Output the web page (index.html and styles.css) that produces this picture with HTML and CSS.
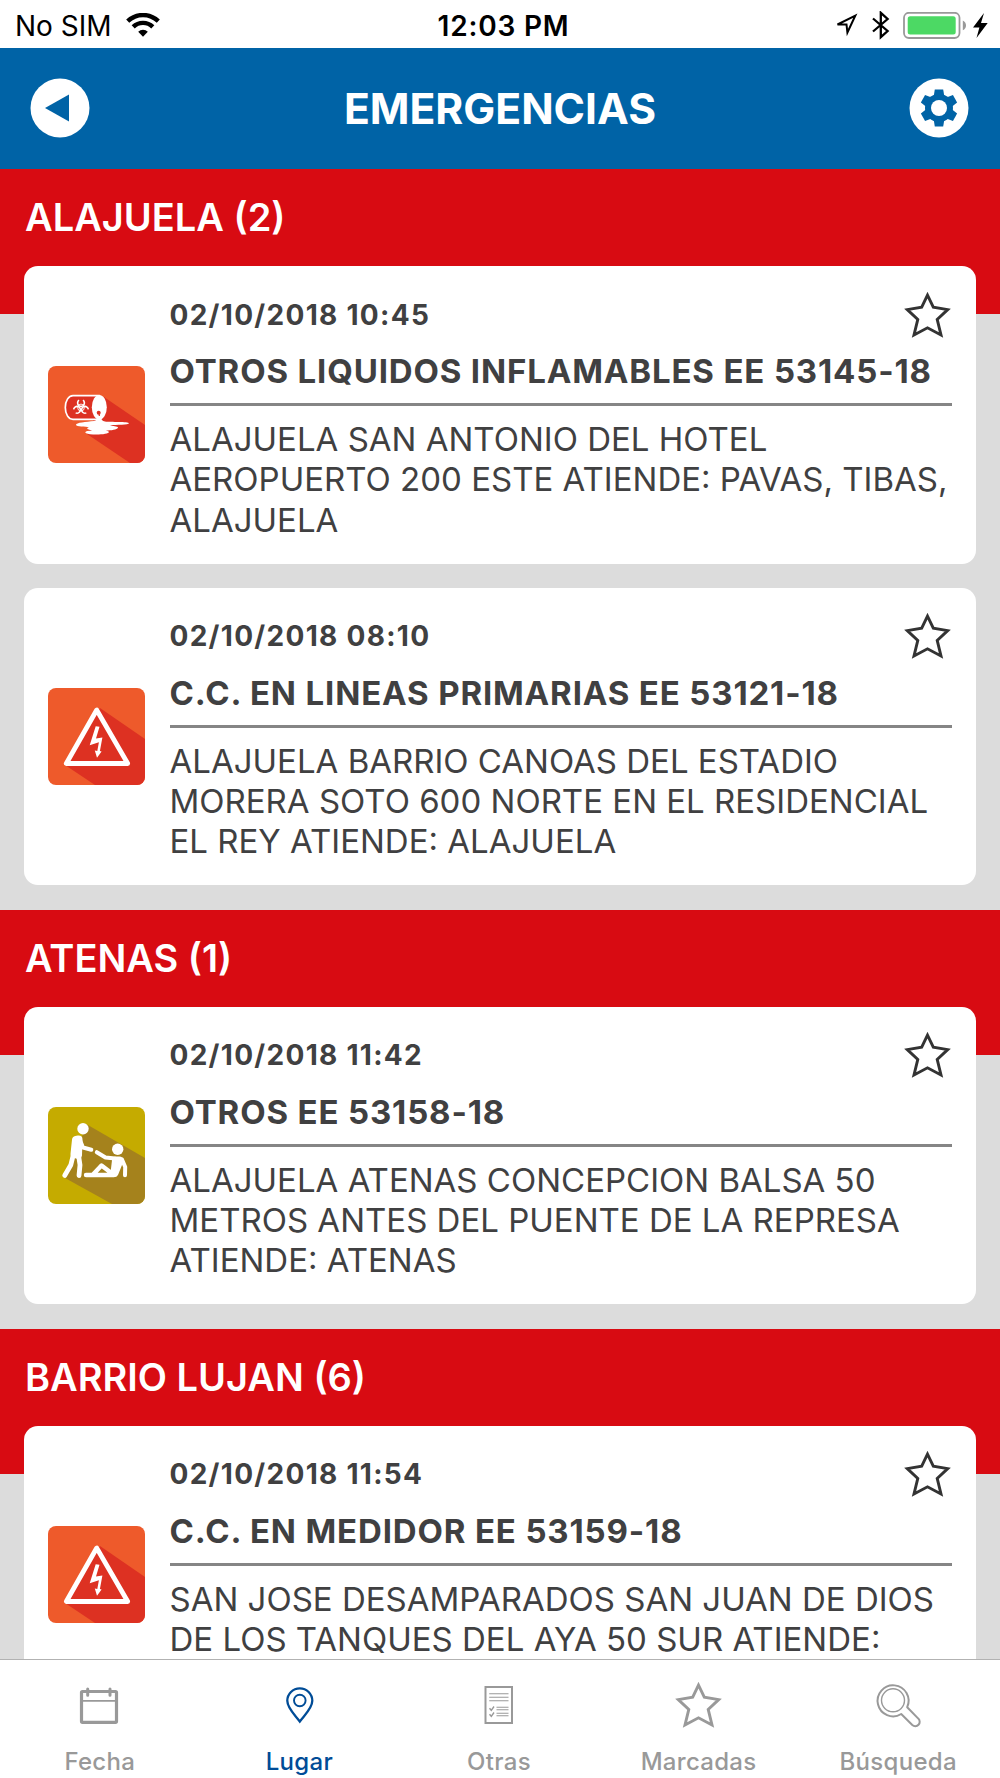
FILE: index.html
```html
<!DOCTYPE html>
<html lang="es">
<head>
    <meta charset="UTF-8">
    <meta name="viewport" content="width=device-width, initial-scale=1.0">
    <title>Emergencias</title>
    <link rel="stylesheet" href="styles.css">
</head>
<body>
    <!-- Shared icons -->
    <svg class="sprite" width="0" height="0">
        <symbol id="star" viewBox="0 0 48 48">
            <path d="M23.5 4.2L29.3 16.2L43.7 18.6L33.2 28.4L37 44L23.5 36.8L10 44L13.8 28.4L3.3 18.6L17.7 16.2Z" fill="none" stroke="currentColor" stroke-width="2.9" stroke-miterlimit="10"/>
        </symbol>
        <symbol id="electric" viewBox="0 0 97 97">
            <rect width="97" height="97" rx="8" fill="#ee5a2b"/>
            <path d="M52 20L97 51V89A8 8 0 0 1 89 97H47L17 77Z" fill="#dd3122"/>
            <path d="M48.7 22L18.3 75.5H79.7Z" fill="#dd3122" stroke="#fff" stroke-width="4.8" stroke-linejoin="round"/>
            <path d="M47.7 38.3L51.5 38.7L48 50.6L54.4 49.4L51.9 63L53.6 63.4L49 69.7L46.8 62.6L49.3 63L50.9 54.3L41.7 57.3Z" fill="#fff"/>
        </symbol>
    </svg>

    <div class="app">
        <!-- Status bar -->
        <div class="status-bar">
            <div class="status-left">
                <span>No SIM</span>
                <svg width="34" height="25" viewBox="0 0 34 25" fill="none" stroke="#000" stroke-width="4.4">
                    <path d="M1.7 8.2A22 22 0 0 1 32.3 8.2"/>
                    <path d="M7.2 13.9A14 14 0 0 1 26.8 13.9"/>
                    <path d="M12.2 18.7A6.8 6.8 0 0 1 21.8 18.7L17 23.8Z" fill="#000" stroke="none"/>
                </svg>
            </div>
            <div class="status-time">12:03 PM</div>
            <div class="status-right">
                <svg width="24" height="26" viewBox="0 0 24 26">
                    <path d="M2.5 11.5L20.3 2.6L12.4 19.5L11.5 11.5Z" fill="none" stroke="#000" stroke-width="2"/>
                </svg>
                <svg class="bluetooth" width="18" height="30" viewBox="0 0 18 30">
                    <path d="M1 7.5L15.6 20L8.8 26.2V1.8L15.6 8L1 20.5" fill="none" stroke="#000" stroke-width="2.3"/>
                </svg>
                <svg class="battery" width="64" height="28" viewBox="0 0 64 28">
                    <rect x="1" y=".8" width="55.5" height="25.2" rx="5" fill="none" stroke="#999" stroke-width="1.8"/>
                    <rect x="4.7" y="4.2" width="48" height="18.3" rx="2.5" fill="#4cd964"/>
                    <path d="M59.8 8.5Q63 10.2 63 13.4T59.8 18.3Z" fill="#999"/>
                </svg>
                <svg width="15" height="26" viewBox="0 0 15 26">
                    <path d="M11 0L0 14.5H6.4L3.5 25L14.7 10H8Z"/>
                </svg>
            </div>
        </div>

        <!-- Header -->
        <div class="header">
            <svg class="round-btn" viewBox="0 0 60 60">
                <circle cx="30" cy="30" r="29.5" fill="#fff"/>
                <path d="M15 30L39 16.4V43.6Z" fill="#0063a6"/>
            </svg>
            <h1>EMERGENCIAS</h1>
            <svg class="round-btn" viewBox="-30 -30 60 60">
                <circle r="29.5" fill="#fff"/>
                <g fill="#0063a6">
                    <circle r="14"/>
                    <path id="tooth" d="M-4.2 -18.5H4.2L5.4 -11H-5.4Z"/>
                    <use href="#tooth" transform="rotate(60)"/>
                    <use href="#tooth" transform="rotate(120)"/>
                    <use href="#tooth" transform="rotate(180)"/>
                    <use href="#tooth" transform="rotate(240)"/>
                    <use href="#tooth" transform="rotate(300)"/>
                </g>
                <circle r="8" fill="#fff"/>
            </svg>
        </div>

        <!-- Emergency list -->
        <div class="list">
            <div class="section">
                <h2>ALAJUELA (2)</h2>
                <div class="card">
                    <svg class="card-icon" viewBox="0 0 97 97">
                        <rect width="97" height="97" rx="8" fill="#ee5a2b"/>
                        <path d="M56 31L97 59V89A8 8 0 0 1 89 97H82L39 68Z" fill="#dd3122"/>
                        <path d="M51 29.7H25C20.5 29.7 17.3 35 17.3 41.5S20.5 53.3 25 53.3H51Z" fill="#dd3122" stroke="#fff" stroke-width="1.7"/>
                        <ellipse cx="51.3" cy="41.3" rx="7.5" ry="12.3" fill="#fff"/>
                        <!-- biohazard sign -->
                        <g fill="none" stroke="#fff" stroke-width="1.6">
                            <circle cx="33" cy="41.5" r="3.4" stroke-width=".9"/>
                            <path id="claw" d="M31 34.2A3.4 3.4 0 1 0 35 34.2"/>
                            <use href="#claw" transform="rotate(120 33 41.5)"/>
                            <use href="#claw" transform="rotate(240 33 41.5)"/>
                        </g>
                        <circle cx="50.7" cy="46.8" r="2" fill="#dd3122"/>
                        <path d="M51.3 46V54" stroke="#dd3122" stroke-width="1.2"/>
                        <path d="M49.3 50Q49.5 54.5 46 55C38 56 28 56.5 28 58.8C28 61 38 60.5 41 61.3C36 63 43 64 44 64.5C36 64.7 35 67.5 42 68.2C50 69.2 61 68 61 66C61 65 58 64.7 58 64.4C65 64.7 70 63 70 61.5C70 60.3 64 60 62 59.3C68 58.8 81 59 81 57.3C81 55.3 62 56.3 57 55.5Q53 55 52.8 50Z" fill="#fff"/>
                    </svg>
                    <div class="card-body">
                        <div class="card-top">
                            <span class="date">02/10/2018 10:45</span>
                            <svg class="star"><use href="#star"/></svg>
                        </div>
                        <h3>OTROS LIQUIDOS INFLAMABLES EE 53145-18</h3>
                        <p>ALAJUELA SAN ANTONIO DEL HOTEL<br>AEROPUERTO 200 ESTE ATIENDE: PAVAS, TIBAS,<br>ALAJUELA</p>
                    </div>
                </div>
                <div class="card">
                    <svg class="card-icon"><use href="#electric"/></svg>
                    <div class="card-body">
                        <div class="card-top">
                            <span class="date">02/10/2018 08:10</span>
                            <svg class="star"><use href="#star"/></svg>
                        </div>
                        <h3>C.C. EN LINEAS PRIMARIAS EE 53121-18</h3>
                        <p>ALAJUELA BARRIO CANOAS DEL ESTADIO<br>MORERA SOTO 600 NORTE EN EL RESIDENCIAL<br>EL REY ATIENDE: ALAJUELA</p>
                    </div>
                </div>
            </div>

            <div class="section">
                <h2>ATENAS (1)</h2>
                <div class="card">
                    <svg class="card-icon" viewBox="0 0 97 97">
                        <rect width="97" height="97" rx="8" fill="#c5ab00"/>
                        <path d="M39 17.5L97 51V89A8 8 0 0 1 89 97H64L17 71Z" fill="#a5821c"/>
                        <g fill="none" stroke="#fff" stroke-linecap="round" stroke-linejoin="round">
                            <circle cx="35" cy="21.7" r="5.7" fill="#fff" stroke="none"/>
                            <path d="M28 33L26.5 47L30 48L30.5 32.5Z" fill="#fff" stroke-width="8"/>
                            <path d="M31.5 32L35 40.5L43.3 42.7" stroke-width="4"/>
                            <path d="M25.5 47L22.8 58L16.7 68.5" stroke-width="4.8"/>
                            <path d="M30.5 48L32 58L31 68.5" stroke-width="4.8"/>
                            <circle cx="69.7" cy="42.3" r="5.7" fill="#fff" stroke="none"/>
                            <path d="M48.8 45.2L57.5 50.5L67 51.5" stroke-width="4"/>
                            <path d="M68 53.5L66.5 66L71.5 53.5Z" fill="#fff" stroke-width="8"/>
                            <path d="M74 52.5L77.2 60L77 68.3" stroke-width="4"/>
                            <path d="M38 68H66L53.5 58.5L45 67.5" stroke-width="4.4"/>
                        </g>
                    </svg>
                    <div class="card-body">
                        <div class="card-top">
                            <span class="date">02/10/2018 11:42</span>
                            <svg class="star"><use href="#star"/></svg>
                        </div>
                        <h3>OTROS EE 53158-18</h3>
                        <p>ALAJUELA ATENAS CONCEPCION BALSA 50<br>METROS ANTES DEL PUENTE DE LA REPRESA<br>ATIENDE: ATENAS</p>
                    </div>
                </div>
            </div>

            <div class="section">
                <h2>BARRIO LUJAN (6)</h2>
                <div class="card">
                    <svg class="card-icon"><use href="#electric"/></svg>
                    <div class="card-body">
                        <div class="card-top">
                            <span class="date">02/10/2018 11:54</span>
                            <svg class="star"><use href="#star"/></svg>
                        </div>
                        <h3>C.C. EN MEDIDOR EE 53159-18</h3>
                        <p>SAN JOSE DESAMPARADOS SAN JUAN DE DIOS<br>DE LOS TANQUES DEL AYA 50 SUR ATIENDE:</p>
                    </div>
                </div>
            </div>
        </div>

        <!-- Tab bar -->
        <div class="tab-bar">
            <div class="tab">
                <svg viewBox="0 0 48 48" fill="none" stroke="currentColor">
                    <rect x="5.5" y="10.5" width="35" height="30.8" rx="1" stroke-width="3.2"/>
                    <path d="M5 19.8H41" stroke-width="1.8"/>
                    <path d="M11.7 8V14.3M34 8V14.3" stroke-width="3" stroke-linecap="round"/>
                </svg>
                <span>Fecha</span>
            </div>
            <div class="tab active">
                <svg viewBox="0 0 48 48" fill="none" stroke="currentColor" stroke-width="2.3">
                    <path d="M24.8 40.5C20.5 34.5 12.3 27.5 12.3 19.8A12.5 12.5 0 0 1 37.3 19.8C37.3 27.5 29.1 34.5 24.8 40.5Z"/>
                    <circle cx="24.8" cy="19.5" r="5.8" stroke-width="1.9"/>
                </svg>
                <span>Lugar</span>
            </div>
            <div class="tab">
                <svg viewBox="0 0 48 48" fill="none" stroke="currentColor">
                    <rect x="10.5" y="6" width="26.5" height="36" stroke-width="2"/>
                    <path d="M14.2 12.8H33.5M14.2 16.3H33.5M14.2 19.8H33.5M21.5 26.3H33.5M21.5 28.8H33.5M21.5 32.3H33.5M21.5 34.8H33.5" stroke-width="1.1"/>
                    <path d="M14.5 27.3L16.3 29.3L19 25.5M14.5 33.3L16.3 35.3L19 31.5" stroke-width="1.4"/>
                </svg>
                <span>Otras</span>
            </div>
            <div class="tab">
                <svg><use href="#star"/></svg>
                <span>Marcadas</span>
            </div>
            <div class="tab">
                <svg viewBox="0 0 48 48" fill="none" stroke="currentColor" stroke-width="2">
                    <path d="M27.2 33A15.5 15.5 0 1 1 33.2 26.2L44.3 37.6A4.3 4.3 0 0 1 38.3 44L27.2 33Z" stroke-linejoin="round"/>
                    <circle cx="19" cy="19.3" r="11.5" stroke-width="1.4"/>
                </svg>
                <span>Búsqueda</span>
            </div>
        </div>
    </div>
</body>
</html>
```
FILE: styles.css
```css
/* General Styles */
* {
    box-sizing: border-box;
}

body {
    font-family: Inter, "Liberation Sans", sans-serif;
    margin: 0;
    padding: 0;
    background-color: #dcdcdc;
    color: #404041;
}

svg {
    display: block;
    flex-shrink: 0;
}

.sprite {
    position: absolute;
}

.app {
    display: flex;
    flex-direction: column;
    height: 1778px;
    overflow: hidden;
}

/* Status Bar */
.status-bar {
    display: grid;
    grid-template-columns: 1fr auto 1fr;
    align-items: center;
    height: 48px;
    padding: 3px 12px 0 15px;
    background: white;
    color: black;
    font-size: 28px;
}

.status-left, .status-right {
    display: flex;
    align-items: center;
}

.status-left {
    gap: 14px;
}

.status-time {
    padding-left: 4px;
    font-weight: 600;
    letter-spacing: 0.8px;
}

.status-right {
    justify-content: flex-end;
}

.bluetooth {
    margin-left: 13px;
}

.battery {
    margin: 0 6px 0 13px;
}

/* Header */
.header {
    display: flex;
    align-items: center;
    justify-content: space-between;
    height: 121px;
    padding: 0 31px 2px 30px;
    background: #0063a6;
    color: white;
}

.header h1 {
    margin: 1px 0 0 1px;
    font-size: 42.6px;
    font-weight: 700;
}

.round-btn {
    width: 60px;
    height: 60px;
}

/* List */
.list {
    flex: 1;
    min-height: 0;
    overflow: hidden;
}

.section {
    padding: 0 24px 24.5px;
    background: linear-gradient(#d80b12 145px, #dcdcdc 145px);
}

.section h2 {
    margin: 0;
    padding-left: 1px;
    font-size: 38px;
    font-weight: 600;
    line-height: 97px;
    color: white;
}

/* Card Style */
.card {
    display: flex;
    align-items: center;
    gap: 24.5px;
    height: 297.5px;
    padding: 0 24px;
    border-radius: 14px;
    background: white;
}

.card + .card {
    margin-top: 24px;
}

.card-icon {
    width: 97px;
    height: 97px;
}

.card-body {
    flex: 1;
    align-self: flex-start;
    padding-top: 24px;
}

.card-top {
    display: flex;
    align-items: center;
    justify-content: space-between;
    height: 49px;
}

.date {
    font-size: 28px;
    font-weight: 700;
    letter-spacing: 1.3px;
}

.star {
    width: 48px;
    height: 48px;
    color: #333;
}

.card h3 {
    margin: 0;
    border-bottom: 3px solid #858585;
    font-size: 33px;
    font-weight: 700;
    letter-spacing: 0.85px;
    line-height: 64px;
    white-space: nowrap;
}

.card p {
    margin: 13px 0 0;
    font-size: 33px;
    line-height: 40.3px;
    white-space: nowrap;
}

/* Tab Bar */
.tab-bar {
    display: flex;
    height: 119px;
    padding-right: 2px;
    border-top: 1px solid #b2b2b2;
    background: white;
}

.tab {
    display: flex;
    flex: 1;
    flex-direction: column;
    align-items: center;
    padding-top: 21px;
    color: #999;
}

.tab svg {
    width: 48px;
    height: 48px;
}

.tab span {
    margin-top: 19px;
    font-size: 24px;
    font-weight: 500;
    letter-spacing: 0.3px;
    line-height: 28px;
}

.tab.active {
    color: #004c97;
}
```
